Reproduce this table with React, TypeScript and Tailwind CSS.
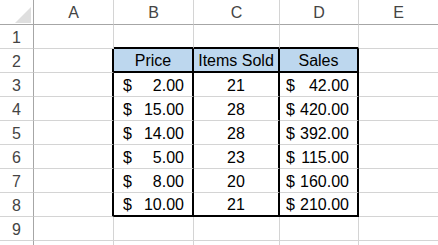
import { Fragment } from 'react'

const cols = ['A', 'B', 'C', 'D', 'E']

const data = [
  { price: '2.00', sold: '21', sales: '42.00' },
  { price: '15.00', sold: '28', sales: '420.00' },
  { price: '14.00', sold: '28', sales: '392.00' },
  { price: '5.00', sold: '23', sales: '115.00' },
  { price: '8.00', sold: '20', sales: '160.00' },
  { price: '10.00', sold: '21', sales: '210.00' },
]

// row 1..10, col 0..4 (A..E)
function inTable(row: number, col: number) {
  return row >= 2 && row <= 8 && col >= 1 && col <= 3
}

function cellBorders(row: number, col: number) {
  const right = inTable(row, col) || inTable(row, col + 1)
    ? 'border-r-2 border-r-black'
    : 'border-r border-r-[#d4d4d4]'
  const bottom = (inTable(row, col) && (row === 2 || row === 8)) || (row === 1 && inTable(2, col))
    ? 'border-b-2 border-b-black'
    : 'border-b border-b-[#d4d4d4]'
  return `${right} ${bottom}`
}

function Cell({ row, col }: { row: number; col: number }) {
  const base = `${cellBorders(row, col)} flex items-center pt-[2px] text-black`
  if (row === 2 && col >= 1 && col <= 3) {
    const label = ['Price', 'Items Sold', 'Sales'][col - 1]
    return <div className={`${base} bg-[#bdd7ee] justify-center`}>{label}</div>
  }
  if (row >= 3 && row <= 8 && col >= 1 && col <= 3) {
    const d = data[row - 3]
    if (col === 2) return <div className={`${base} justify-center`}>{d.sold}</div>
    const value = col === 1 ? d.price : d.sales
    return (
      <div className={`${base} justify-between ${col === 1 ? 'pl-[9px]' : 'pl-[6px]'} pr-[8px]`}>
        <span>$</span>
        <span>{value}</span>
      </div>
    )
  }
  return <div className={base} />
}

export default function App() {
  const rows = [1, 2, 3, 4, 5, 6, 7, 8, 9, 10]
  return (
    <div className="w-[438px] h-[245px] overflow-hidden bg-white font-['Liberation_Sans',Arial,sans-serif] text-[16px] leading-none">
      <div className="grid grid-cols-[34px_80px_80px_86px_79px_80px] grid-rows-[25px_repeat(10,24px)]">
        {/* corner */}
        <div className="border-r border-b border-r-[#a6a6a6] border-b-[#a6a6a6] relative">
          <svg className="absolute left-[15px] top-[7px]" width="16" height="16" viewBox="0 0 16 16">
            <polygon points="16,0 16,16 0,16" fill="#dfdfdf" />
          </svg>
        </div>
        {cols.map((c) => (
          <div
            key={c}
            className="border-r border-b border-r-[#d4d4d4] border-b-[#a6a6a6] flex items-center justify-center pt-[1px] text-[#444]"
          >
            {c}
          </div>
        ))}
        {rows.map((r) => (
          <Fragment key={r}>
            <div className="border-r border-b border-r-[#a6a6a6] border-b-[#d4d4d4] flex items-center justify-center pt-[2px] text-[#444]">
              {r < 10 ? r : ''}
            </div>
            {cols.map((c, ci) => (
              <Cell key={c} row={r} col={ci} />
            ))}
          </Fragment>
        ))}
      </div>
    </div>
  )
}
